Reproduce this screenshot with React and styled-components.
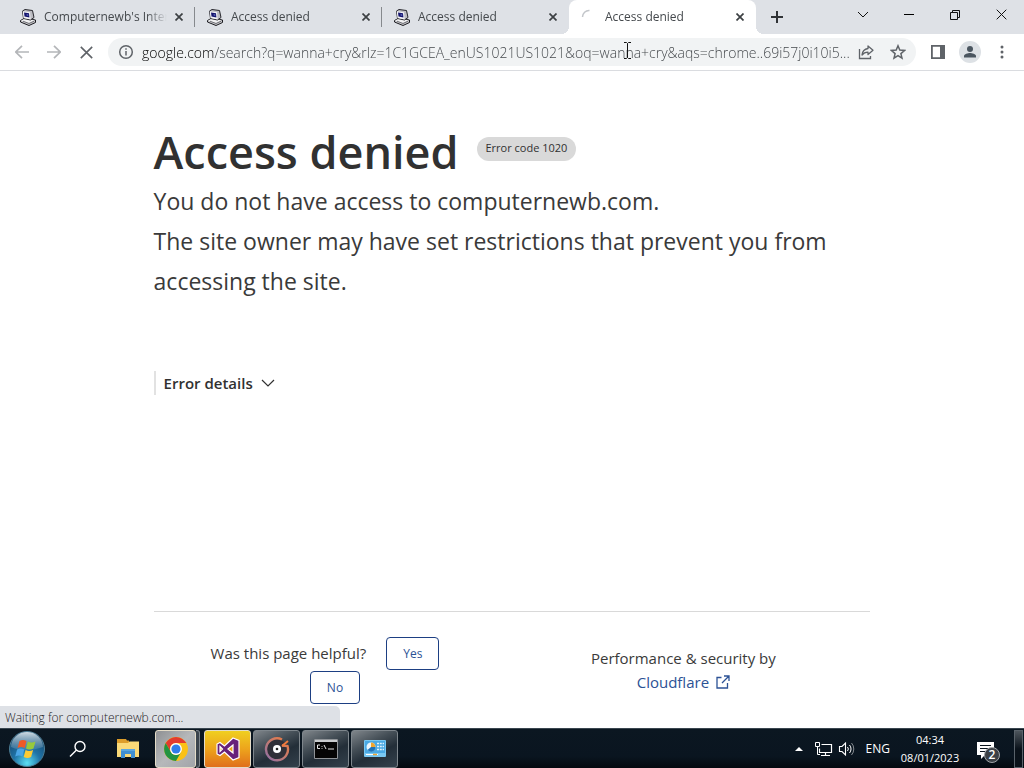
import React, { useState } from "react";
import styled, { createGlobalStyle } from "styled-components";

const GlobalStyle = createGlobalStyle`
  * {
    box-sizing: border-box;
  }
  body {
    margin: 0;
    background: #fff;
    color: #313131;
    font-family: "Open Sans", "Noto Sans", sans-serif;
  }
  button {
    font-family: inherit;
    cursor: pointer;
  }
  svg {
    display: block;
    flex: none;
  }
`;

const Screen = styled.div`
  display: flex;
  flex-direction: column;
  min-height: 100vh;
`;

/* ---------- tab strip ---------- */

const TabStrip = styled.header`
  display: flex;
  align-items: stretch;
  height: 34px;
  padding-left: 8px;
  background: #dee1e6;
`;

const Tab = styled.div`
  position: relative;
  display: flex;
  align-items: center;
  flex: 0 1 187px;
  min-width: 0;
  padding: 0 8px 0 12px;
  border-radius: 8px 8px 0 0;
  background: ${(p) => (p.$active ? "#fff" : "transparent")};

  &::before,
  &::after {
    content: "";
    display: ${(p) => (p.$active ? "block" : "none")};
    position: absolute;
    bottom: 0;
    width: 8px;
    height: 8px;
  }
  &::before {
    right: 100%;
    background: radial-gradient(circle at 0 0, transparent 8px, #fff 8px);
  }
  &::after {
    left: 100%;
    background: radial-gradient(circle at 100% 0, transparent 8px, #fff 8px);
  }
`;

const TabDivider = styled.span`
  position: absolute;
  right: 0;
  top: 7px;
  width: 1px;
  height: 20px;
  background: #86898d;
`;

const TabTitle = styled.span`
  flex: 1;
  min-width: 0;
  margin-left: 8px;
  overflow: hidden;
  white-space: nowrap;
  font-size: 12px;
  line-height: 16px;
  color: #45494d;
  mask-image: linear-gradient(to right, #000 calc(100% - 24px), transparent calc(100% - 4px));
`;

const IconButton = styled.button`
  display: flex;
  align-items: center;
  justify-content: center;
  flex: none;
  width: ${(p) => p.$size || 32}px;
  height: ${(p) => p.$size || 32}px;
  padding: 0;
  border: 0;
  border-radius: 50%;
  background: transparent;
  color: ${(p) => p.$color || "#5f6368"};
`;

const NewTab = styled(IconButton)`
  margin: 3px 0 0 7px;
`;

const WindowControls = styled.div`
  display: flex;
  margin-left: auto;
`;

const WindowButton = styled.button`
  display: flex;
  align-items: center;
  justify-content: center;
  width: 46px;
  height: 29px;
  padding: 0;
  border: 0;
  background: transparent;
  color: #111;
`;

/* ---------- toolbar ---------- */

const Toolbar = styled.div`
  display: flex;
  align-items: center;
  height: 37px;
  padding: 0 6px;
  border-bottom: 1px solid #dadce0;
  background: #fff;
`;

const Omnibox = styled.form`
  display: flex;
  align-items: center;
  flex: 1;
  min-width: 0;
  height: 28px;
  margin: 0 6px;
  padding: 0 2px 0 10px;
  border-radius: 14px;
  background: #f1f3f4;
`;

const UrlInput = styled.input`
  flex: 1;
  min-width: 0;
  height: 24px;
  margin-left: 8px;
  padding: 0;
  border: 0;
  outline: 0;
  font-family: inherit;
  font-size: 14px;
  font-weight: 300;
  background: linear-gradient(to right, #000 73px, #3f4347 73px);
  background-clip: text;
  -webkit-text-fill-color: transparent;
`;

const Pointer = styled.svg`
  position: absolute;
  left: 623px;
  top: 42px;
`;

/* ---------- page ---------- */

const Page = styled.main`
  display: flex;
  flex-direction: column;
  flex: 1;
  width: 70%;
  margin: 0 auto;
  padding: 51px 0 24px;
`;

const TitleRow = styled.div`
  display: flex;
  align-items: flex-start;
  gap: 18px;
`;

const Title = styled.h1`
  margin: 0;
  font-size: 45px;
  font-weight: 600;
  line-height: 59px;
`;

const ErrorCode = styled.span`
  margin-top: 15px;
  padding: 0 9px 2px;
  border-radius: 12px;
  background: #d9d9d9;
  font-size: 11px;
  line-height: 22px;
`;

const Lead = styled.p`
  margin: 0;
  font-size: 23px;
  line-height: 40px;
  color: #3a3a3a;
`;

const Details = styled.button`
  display: flex;
  align-items: center;
  align-self: flex-start;
  gap: 8px;
  margin-top: 70px;
  padding: 0 0 0 8px;
  border: 0;
  border-left: 2px solid #e2e2e2;
  background: transparent;
  color: #313131;
  font-size: 15px;
  font-weight: 600;
  line-height: 24px;
`;

const PageFooter = styled.footer`
  display: grid;
  grid-template-columns: 11fr 12fr;
  margin-top: auto;
  padding-top: 25px;
  border-top: 1px solid #d9d9d9;
  text-align: center;
  font-size: 15px;
  color: #3a3a3a;
`;

const Feedback = styled.div`
  display: flex;
  flex-wrap: wrap;
  align-items: center;
  justify-content: center;
  row-gap: 1px;
  padding: 0 24px;
`;

const Question = styled.span`
  padding-bottom: 2px;
`;

const FeedbackButton = styled.button`
  margin-left: 20px;
  height: 33px;
  padding: 0 16px;
  border: 1px solid #1d3f83;
  border-radius: 4px;
  background: #fff;
  color: #2c5295;
  font-size: 12px;
`;

const Credit = styled.p`
  margin: 9px 0 0;
  line-height: 24px;
`;

const CreditLink = styled.a`
  display: flex;
  align-items: center;
  justify-content: center;
  gap: 7px;
  color: #2c5295;
  text-decoration: none;
`;

/* ---------- status bubble and taskbar ---------- */

const Bottom = styled.div`
  position: relative;
`;

const Status = styled.div`
  position: absolute;
  left: 0;
  bottom: 100%;
  width: 340px;
  height: 22px;
  padding-left: 5px;
  border-radius: 0 5px 0 0;
  background: #dee1e6;
  color: #1f2225;
  font-size: 12px;
  font-weight: 300;
  line-height: 23px;
`;

const Taskbar = styled.nav`
  display: flex;
  align-items: center;
  height: 40px;
  border-top: 1px solid #3a4650;
  background: linear-gradient(#0b1721, #0a1520 70%, #04090f);
  color: #fff;
`;

const StartButton = styled(IconButton)`
  margin: 0 9px 0 8px;
`;

const PlainTask = styled.button`
  display: flex;
  align-items: center;
  justify-content: center;
  width: ${(p) => p.$width}px;
  height: 38px;
  padding: 0;
  border: 0;
  background: transparent;
  color: #fff;
`;

const looks = {
  active: "linear-gradient(135deg, #8e9093, #b6b8ba 50%, #a2a5a9)",
  alert: "linear-gradient(#f0cf20, #eda41c 50%, #e06f1c)",
  open: "linear-gradient(155deg, #80868b, #454f57 35%, #232e38 60%, #34414c)",
};

const Task = styled.button`
  display: flex;
  align-items: center;
  justify-content: center;
  width: ${(p) => (p.$look === "active" ? 41 : 47)}px;
  height: 38px;
  margin-right: 2px;
  padding: 0;
  border: 1px solid ${(p) => (p.$look === "open" ? "#7e868c" : "#e4dcc8")};
  border-radius: 3px;
  background: ${(p) => looks[p.$look]};
`;

const StackEdge = styled.span`
  width: 4px;
  height: 38px;
  margin: 0 4px 0 -2px;
  border: 1px solid #7e868c;
  border-left: 0;
  border-radius: 0 3px 3px 0;
  background: #3b444c;
`;

const Tray = styled.div`
  display: flex;
  align-items: center;
  margin-left: auto;
  height: 100%;
`;

const Language = styled.span`
  margin: 0 10px 0 8px;
  font-size: 12px;
  line-height: 16px;
`;

const Clock = styled.time`
  width: 60px;
  text-align: center;
  font-size: 11px;
  line-height: 18px;
  white-space: nowrap;
`;

const Notifications = styled.button`
  position: relative;
  width: 24px;
  height: 28px;
  margin: 0 14px 0 16px;
  padding: 4px 0 0 1px;
  border: 0;
  background: transparent;
`;

const Count = styled.span`
  position: absolute;
  right: 0;
  bottom: 0;
  width: 16px;
  height: 16px;
  border: 1px solid #a0a4a8;
  border-radius: 50%;
  background: #3b4046;
  color: #fff;
  font-size: 12px;
  font-weight: 600;
  line-height: 14px;
`;

const ShowDesktop = styled.button`
  width: 9px;
  height: 38px;
  margin-right: 1px;
  padding: 0;
  border: 1px solid #59626a;
  background: linear-gradient(#4d555c, #0a121a 50%);
`;

/* ---------- icons ---------- */

const ComputerIcon = () => (
  <svg width="16" height="17" viewBox="0 0 16 17">
    <path d="M.5 11.500 5 9l10.500 2v2.500L9 16.500l-8.500-3.500z" fill="#c9c9cc" stroke="#1b1b20" />
    <path d="M1 11.500 5.500 9.500l9 1.700L9 14z" fill="#f1f1f2" />
    <path d="M2.500 2 5 .5l7.500 1 1.500 7-3.500 2.500-7-1.500z" fill="#bcbcc2" stroke="#26262c" />
    <path d="M2.700 2.200 10 3.200l.6 7.300-7-1.500z" fill="#f4f4f6" />
    <path d="M4 3.600 9 4.300l.4 4.200-4.900-.9z" fill="#14146e" />
    <path d="M6.500 5.200 8.300 5.500v1.300l-1.600-.3z" fill="#6f7ccc" />
    <path d="M3 12.200 9 14.500l5-2.300" fill="none" stroke="#55555c" strokeWidth=".8" />
  </svg>
);

const CloseIcon = ({ size = 8, weight = 1.7 }) => (
  <svg width={size} height={size} viewBox="0 0 8 8" fill="none" stroke="currentColor" strokeWidth={(weight * 8) / size}>
    <path d="M.5.5l7 7M7.500.5l-7 7" />
  </svg>
);

const Spinner = () => (
  <svg width="16" height="16" viewBox="0 0 16 16" fill="none" stroke="#c3c6ca" strokeWidth="1.500">
    <path d="M1.500 8A6.500 6.500 0 0 1 8.500 1.500" />
  </svg>
);

const Arrow = ({ flip }) => (
  <svg width="14" height="14" viewBox="0 0 14 14" fill="none" stroke="#b4b6b9" strokeWidth="1.700">
    <path d={flip ? "M0 7h13M7 .8 13.200 7 7 13.200" : "M14 7H1M7 .8.8 7 7 13.200"} />
  </svg>
);

const ShareIcon = () => (
  <svg width="16" height="16" viewBox="0 0 16 16" fill="none" stroke="currentColor" strokeWidth="1.300">
    <path d="M1.500 5v9.500h11V12" />
    <path d="M10 2l5 4.200-5 4.300V8.200C7.500 8.200 5.500 9 4 11c.4-3.500 2.500-6 6-6.500z" strokeLinejoin="round" />
  </svg>
);

const StarIcon = () => (
  <svg width="16" height="16" viewBox="0 0 16 16" fill="none" stroke="currentColor" strokeWidth="1.500">
    <path d="M8 1.800l1.800 4.300 4.700.4-3.600 3.100 1.100 4.600L8 11.700l-4 2.500 1.100-4.600L1.500 6.500l4.700-.4z" />
  </svg>
);

const StartIcon = () => (
  <svg width="38" height="38" viewBox="0 0 38 38">
    <defs>
      <radialGradient id="orb" cx="50%" cy="90%" r="85%">
        <stop offset="0" stopColor="#5de0f4" />
        <stop offset=".45" stopColor="#1f74a8" />
        <stop offset="1" stopColor="#174368" />
      </radialGradient>
      <linearGradient id="shine" x2="0" y2="1">
        <stop offset="0" stopColor="#e3edf2" stopOpacity=".9" />
        <stop offset="1" stopColor="#a8c8d8" stopOpacity=".15" />
      </linearGradient>
    </defs>
    <circle cx="19" cy="19" r="17.500" fill="url(#orb)" stroke="#4c7d94" />
    <path d="M3 17a16 15 0 0 1 32 0c-9 3-21 5-32 0z" fill="url(#shine)" />
    <path d="M11.500 11c2.500-1.600 4.600-1.300 7 0l-1.800 7c-2.300-1.300-4.500-1.500-7.200 0z" fill="#ee5a28" />
    <path d="M19.800 11.600c2.500 1.300 5 1.300 7.700-.2l-2 7c-2.600 1.400-5 1.500-7.500.2z" fill="#97c93d" />
    <path d="M9.100 19.500c2.500-1.400 4.700-1.200 7.200 0l-1.900 7c-2.200-1.200-4.500-1.300-7.200.1z" fill="#4aa5e6" />
    <path d="M17.600 20.100c2.500 1.300 4.900 1.200 7.500-.2l-2 7.100c-2.500 1.400-4.900 1.300-7.400 0z" fill="#fdcb34" />
  </svg>
);

const SearchIcon = () => (
  <svg width="18" height="18" viewBox="0 0 18 18" fill="none" stroke="currentColor" strokeWidth="1.400">
    <circle cx="11" cy="6.500" r="5" />
    <path d="M7.500 10 1 16.500" />
  </svg>
);

const FolderIcon = () => (
  <svg width="24" height="22" viewBox="0 0 24 22">
    <path d="M1 1h9l1 1.500h2V5H1z" fill="#dc9d2a" />
    <path d="M1 5h11l1.500-1.500H23V19H1z" fill="#f9d978" />
    <path d="M5 20v-9h14v9h-4v-4H9v4z" fill="#3f8fd2" />
    <path d="M5 11h14v2H5z" fill="#5ba6de" />
  </svg>
);

const ChromeIcon = () => (
  <svg width="26" height="26" viewBox="0 0 48 48">
    <circle cx="24" cy="24" r="22" fill="#fbc116" />
    <path d="M4.950 13A22 22 0 0 1 43.050 13H24a11 11 0 0 0-9.500 16.500z" fill="#e33b2e" />
    <path d="M4.950 13 14.500 29.500A11 11 0 0 0 33.500 29.500L24 46A22 22 0 0 1 4.950 13z" fill="#229342" />
    <circle cx="24" cy="24" r="11" fill="#fff" />
    <circle cx="24" cy="24" r="8.500" fill="#2f7de9" />
  </svg>
);

const StudioIcon = () => (
  <svg width="24" height="24" viewBox="0 0 24 24">
    <path
      d="M17 1l6 2.500v17L17 23l-8.500-8L4 18.500 1 17V7l3-1.500L8.500 9zM17 8l-5 4 5 4zM4 9.500v5L6.500 12z"
      fill="#68217a"
      stroke="#fff"
      strokeWidth="1.200"
      fillRule="evenodd"
    />
  </svg>
);

const MusicIcon = () => (
  <svg width="26" height="26" viewBox="0 0 26 26" fill="none">
    <defs>
      <linearGradient id="ring" x1="1" x2="0" y2="1">
        <stop offset="0" stopColor="#f07a3c" />
        <stop offset=".5" stopColor="#c47a70" />
        <stop offset="1" stopColor="#8c6fa8" />
      </linearGradient>
    </defs>
    <circle cx="13" cy="13" r="10" fill="#303038" />
    <path d="M18 3.500A11 11 0 1 0 23.500 10L18 9.500" stroke="url(#ring)" strokeWidth="2.400" />
    <path d="M18 10l6-5" stroke="#f07a3c" strokeWidth="2" />
    <circle cx="13" cy="13" r="4" fill="#fff" />
    <circle cx="13" cy="13" r="1.300" fill="#222" />
  </svg>
);

const TerminalIcon = () => (
  <svg width="24" height="20" viewBox="0 0 24 20">
    <path d="M.5.5h23v19H.5z" fill="#050505" stroke="#8f9397" />
    <path d="M1 1h22v2H1z" fill="#c9ccce" />
    <path d="M6 6H3.500v3.500H6M8 7v.8M8 9v.8M10 6l2 4M14 10h6" fill="none" stroke="#e6e6e6" />
  </svg>
);

const PanelIcon = () => (
  <svg width="22" height="18" viewBox="0 0 22 18">
    <rect width="22" height="17" rx="1" fill="#79c8f2" />
    <rect x="1" y="1" width="20" height="12" fill="#4aa9e4" />
    <circle cx="7" cy="7" r="4.500" fill="#e9f6fd" />
    <path d="M7 7V2.500A4.500 4.500 0 0 1 11.500 7z" fill="#f0a52f" />
    <path d="M7 7h4.500A4.500 4.500 0 0 1 3.500 10z" fill="#2174b8" />
    <path d="M13 3.500h7M13 6.500h7M13 9.500h7" stroke="#e0f3fd" strokeWidth="1.400" strokeDasharray="2 .8" />
    <path d="M2 14.500h12" stroke="#fff" />
    <path d="M9 14.500h4" stroke="#f0a52f" strokeWidth="1.500" />
  </svg>
);

const NetworkIcon = () => (
  <svg width="18" height="16" viewBox="0 0 18 16" fill="none" stroke="#fff">
    <path d="M6.500 3.500h10v8H4.500v-4M10.500 11.500v3M6 14.500h9" strokeWidth="1.200" />
    <path d="M.5 1.500h4v4h-4zM2.500 5.500v8H5" />
  </svg>
);

const SpeakerIcon = () => (
  <svg width="18" height="16" viewBox="0 0 18 16" fill="none" stroke="#fff">
    <path d="M1.500 5.500H4l3.500-3.500v12L4 10.500H1.500z" strokeWidth="1.100" />
    <path d="M9.500 6a3 3 0 0 1 0 4M11.500 4a6 6 0 0 1 0 8" />
    <path d="M13.500 2a9 9 0 0 1 0 12" opacity=".5" />
  </svg>
);

const tabs = [
  { id: 1, title: "Computernewb's Inter", divider: true },
  { id: 2, title: "Access denied", divider: true },
  { id: 3, title: "Access denied" },
  { id: 4, title: "Access denied", active: true },
];

const startUrl =
  "google.com/search?q=wanna+cry&rlz=1C1GCEA_enUS1021US1021&oq=wanna+cry&aqs=chrome..69i57j0i10i5...";

function Browser() {
  const [url, setUrl] = useState(startUrl);

  return (
    <>
      <TabStrip>
        {tabs.map((tab) => (
          <Tab key={tab.id} $active={tab.active}>
            {tab.active ? <Spinner /> : <ComputerIcon />}
            <TabTitle>{tab.title}</TabTitle>
            <IconButton $size={16} $color="#3c4043" aria-label="Close tab">
              <CloseIcon />
            </IconButton>
            {tab.divider && <TabDivider />}
          </Tab>
        ))}
        <NewTab $size={28} $color="#303336" aria-label="New tab">
          <svg width="12" height="12" viewBox="0 0 12 12" stroke="currentColor" strokeWidth="2">
            <path d="M6 0v12M0 6h12" />
          </svg>
        </NewTab>
        <WindowControls>
          <WindowButton aria-label="Search tabs">
            <svg width="12" height="8" viewBox="0 0 12 8" fill="none" stroke="currentColor">
              <path d="M1 1l5 5 5-5" />
            </svg>
          </WindowButton>
          <WindowButton aria-label="Minimize">
            <svg width="10" height="1" viewBox="0 0 10 1">
              <path d="M0 0h10v1H0z" />
            </svg>
          </WindowButton>
          <WindowButton aria-label="Restore">
            <svg width="10" height="10" viewBox="0 0 10 10" fill="none" stroke="currentColor">
              <path d="M.5 2.500h7v7h-7zM2.500 2.500v-2h7v7h-2" />
            </svg>
          </WindowButton>
          <WindowButton aria-label="Close">
            <CloseIcon size={11} weight={1} />
          </WindowButton>
        </WindowControls>
      </TabStrip>

      <Toolbar>
        <IconButton aria-label="Back">
          <Arrow />
        </IconButton>
        <IconButton aria-label="Forward">
          <Arrow flip />
        </IconButton>
        <IconButton aria-label="Stop">
          <CloseIcon size={13} weight={1.6} />
        </IconButton>
        <Omnibox onSubmit={(e) => e.preventDefault()}>
          <svg width="16" height="16" viewBox="0 0 16 16" fill="none" stroke="#5f6368" strokeWidth="1.500">
            <circle cx="8" cy="8" r="6.300" />
            <path d="M8 7v4.500M8 4.300v1.500" />
          </svg>
          <UrlInput aria-label="Address bar" spellCheck="false" value={url} onChange={(e) => setUrl(e.target.value)} />
          <IconButton type="button" aria-label="Share">
            <ShareIcon />
          </IconButton>
          <IconButton type="button" aria-label="Bookmark">
            <StarIcon />
          </IconButton>
        </Omnibox>
        <IconButton aria-label="Side panel">
          <svg width="14" height="14" viewBox="0 0 14 14">
            <path d="M0 0h14v14H0zM1.800 1.800v10.400H9V1.800z" fill="currentColor" fillRule="evenodd" />
          </svg>
        </IconButton>
        <IconButton aria-label="Profile">
          <svg width="22" height="22" viewBox="0 0 22 22">
            <circle cx="11" cy="11" r="11" fill="#dde1e5" />
            <circle cx="11" cy="8" r="3" fill="#4b5660" />
            <path d="M5 16.500v-1.500c0-2 4-3 6-3s6 1 6 3v1.500z" fill="#4b5660" />
          </svg>
        </IconButton>
        <IconButton aria-label="Menu">
          <svg width="4" height="14" viewBox="0 0 4 14" fill="currentColor">
            <circle cx="2" cy="2" r="1.500" />
            <circle cx="2" cy="7" r="1.500" />
            <circle cx="2" cy="12" r="1.500" />
          </svg>
        </IconButton>
      </Toolbar>
    </>
  );
}

function ErrorPage() {
  return (
    <Page>
      <TitleRow>
        <Title>Access denied</Title>
        <ErrorCode>Error code 1020</ErrorCode>
      </TitleRow>
      <Lead>You do not have access to computernewb.com.</Lead>
      <Lead>The site owner may have set restrictions that prevent you from accessing the site.</Lead>
      <Details>
        Error details
        <svg width="14" height="8" viewBox="0 0 14 8" fill="none" stroke="currentColor" strokeWidth="1.200">
          <path d="M1 1l6 6 6-6" />
        </svg>
      </Details>
      <PageFooter>
        <Feedback>
          <Question>Was this page helpful?</Question>
          <FeedbackButton>Yes</FeedbackButton>
          <FeedbackButton>No</FeedbackButton>
        </Feedback>
        <Credit>
          Performance &amp; security by
          <CreditLink href="#cloudflare">
            Cloudflare
            <svg width="14" height="14" viewBox="0 0 14 14" fill="none" stroke="currentColor" strokeWidth="1.300">
              <path d="M5.500 2.500H1v10.500h10.500V8M8 1h5v5M13 1 6 8" />
            </svg>
          </CreditLink>
        </Credit>
      </PageFooter>
    </Page>
  );
}

function Desktop() {
  return (
    <Bottom>
      <Status>Waiting for computernewb.com...</Status>
      <Taskbar>
        <StartButton $size={38} aria-label="Start">
          <StartIcon />
        </StartButton>
        <PlainTask $width={46} aria-label="Search">
          <SearchIcon />
        </PlainTask>
        <PlainTask $width={54} aria-label="File Explorer">
          <FolderIcon />
        </PlainTask>
        <Task $look="active" aria-label="Chrome">
          <ChromeIcon />
        </Task>
        <StackEdge />
        <Task $look="alert" aria-label="Visual Studio">
          <StudioIcon />
        </Task>
        <Task $look="open" aria-label="Music">
          <MusicIcon />
        </Task>
        <Task $look="open" aria-label="Command Prompt">
          <TerminalIcon />
        </Task>
        <Task $look="open" aria-label="Control Panel">
          <PanelIcon />
        </Task>
        <Tray>
          <PlainTask $width={26} aria-label="Show hidden icons">
            <svg width="8" height="4" viewBox="0 0 8 4" fill="currentColor">
              <path d="M4 0l4 4H0z" />
            </svg>
          </PlainTask>
          <PlainTask $width={24} aria-label="Network">
            <NetworkIcon />
          </PlainTask>
          <PlainTask $width={22} aria-label="Volume">
            <SpeakerIcon />
          </PlainTask>
          <Language>ENG</Language>
          <Clock>
            04:34
            <br />
            08/01/2023
          </Clock>
          <Notifications aria-label="Notifications">
            <svg width="17" height="17" viewBox="0 0 17 17">
              <path d="M0 0h17v13H8l-4 4v-4H0z" fill="#fff" />
              <path d="M3 3.500h11M3 6.500h11M3 9.500h8" stroke="#0b1620" />
            </svg>
            <Count>2</Count>
          </Notifications>
          <ShowDesktop aria-label="Show desktop" />
        </Tray>
      </Taskbar>
    </Bottom>
  );
}

export default function App() {
  return (
    <Screen>
      <GlobalStyle />
      <Browser />
      <ErrorPage />
      <Desktop />
      <Pointer width="9" height="17" viewBox="0 0 9 17" fill="none" stroke="#111">
        <path d="M1 .5h2.500l1 1 1-1H8M4.500 1.500v14M1 16.500h2.500l1-1 1 1H8" />
      </Pointer>
    </Screen>
  );
}
